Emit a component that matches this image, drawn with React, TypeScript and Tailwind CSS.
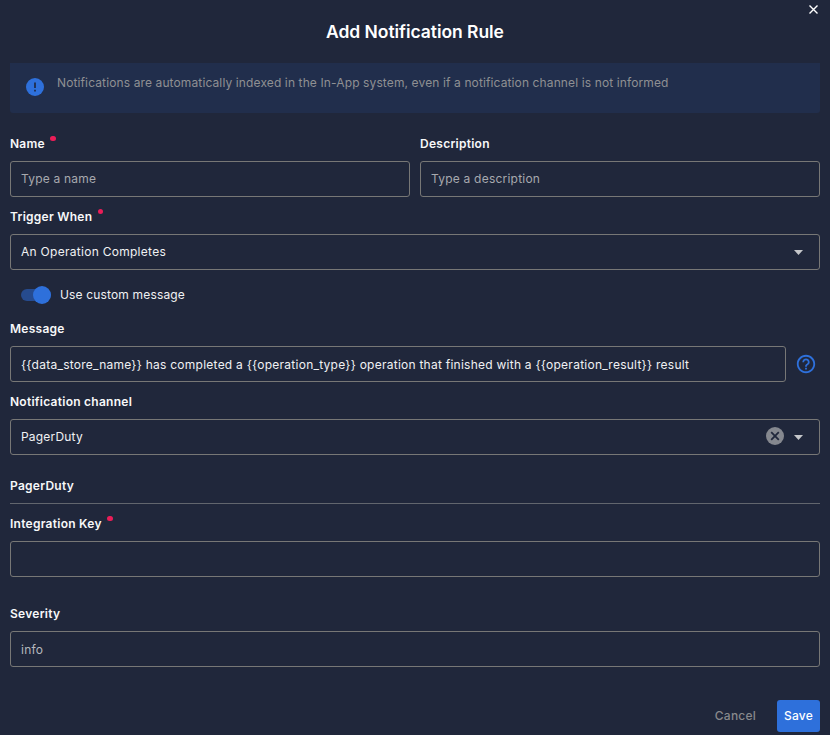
import type { ReactNode } from "react";

const Label = ({ children, required, className = "" }: { children: ReactNode; required?: boolean; className?: string }) => (
  <div className={`flex h-[18px] items-center text-[12px] leading-[18px] font-semibold tracking-[0.26px] text-[#f7f8f9] ${className}`}>
    <span>{children}</span>
    {required && <span className="mb-[12px] ml-[5.500px] h-[5px] w-[5.500px] rounded-full bg-[#ea1d58]" />}
  </div>
);

const box = "flex h-9 items-center rounded-[3px] border border-[#777776] px-[10px] text-[12px]";

const Caret = () => (
  <svg width="9" height="5" viewBox="0 0 10 5" preserveAspectRatio="none" fill="#c5c7ca"><path d="M0 0h10L5 5z" /></svg>
);

export default function App() {
  return (
    <div className="h-[735px] w-[830px] overflow-hidden bg-[#20273b] px-[10px] font-['Inter','Liberation_Sans',sans-serif] text-[12px] text-[#f0f1f3]">
      <div className="-mr-[10px] flex h-[18px] justify-end pt-[5px] pr-[12px]">
        <svg width="9" height="9" viewBox="0 0 9 9" stroke="#fff" strokeWidth="1.4"><path d="M.5.5l8 8M8.500.5l-8 8" /></svg>
      </div>
      <h1 className="h-[45px] text-center text-[17.500px] leading-[27px] font-semibold tracking-[-0.050px] text-white">Add Notification Rule</h1>
      <div className="flex h-[50px] rounded-b-[3px] bg-[#212e4c] pl-[16px]">
        <svg className="mt-[15px]" width="18" height="18" viewBox="0 0 18 18"><circle cx="9" cy="9" r="9" fill="#2e70db" /><path d="M8.100 4.500h1.800v5.500H8.100zM8.100 11.800h1.800v1.700H8.100z" fill="#212e4c" /></svg>
        <p className="mt-[10px] ml-[13px] leading-[20px] tracking-[0.12px] text-[#8f9093]">Notifications are automatically indexed in the In-App system, even if a notification channel is not informed</p>
      </div>
      <div className="mt-[22px] grid grid-cols-2 gap-[10px]">
        <div><Label required>Name</Label><div className={`mt-2 tracking-[0.2px] text-[#a7a9ae] ${box}`}>Type a name</div></div>
        <div><Label>Description</Label><div className={`mt-2 tracking-[0.22px] text-[#a7a9ae] ${box}`}>Type a description</div></div>
      </div>
      <Label required className="mt-[11px]">Trigger When</Label>
      <div className={`mt-2 justify-between pr-4 tracking-[0.28px] ${box}`}>An Operation Completes<Caret /></div>
      <div className="mt-4 ml-[11px] flex h-[18px] items-center">
        <div className="flex h-3 w-[30px] items-center justify-end rounded-full bg-[#264b8e]"><span className="size-[18px] shrink-0 rounded-full bg-[#2e70db]" /></div>
        <span className="ml-[9px] tracking-[0.16px]">Use custom message</span>
      </div>
      <Label className="mt-4">Message</Label>
      <div className="mt-2 flex items-center">
        <div className={`w-[776px] pt-[2px] tracking-[0.25px] ${box}`}>{"{{data_store_name}} has completed a {{operation_type}} operation that finished with a {{operation_result}} result"}</div>
        <svg className="ml-[9px]" width="22" height="22" viewBox="0 0 24 24" fill="#2e70db"><path d="M11 18h2v-2h-2zm1-16C6.480 2 2 6.480 2 12s4.480 10 10 10 10-4.480 10-10S17.520 2 12 2m0 18c-4.410 0-8-3.590-8-8s3.590-8 8-8 8 3.590 8 8-3.590 8-8 8m0-14c-2.210 0-4 1.790-4 4h2c0-1.100.9-2 2-2s2 .9 2 2c0 2-3 1.750-3 5h2c0-2.250 3-2.500 3-5 0-2.210-1.790-4-4-4" /></svg>
      </div>
      <Label className="mt-[11px]">Notification channel</Label>
      <div className={`mt-2 pr-4 tracking-[0.2px] ${box}`}>
        <span className="flex-1">PagerDuty</span>
        <svg className="mr-[10px] mb-[2px]" width="18" height="18" viewBox="0 0 18 18"><circle cx="9" cy="9" r="9" fill="#85888f" /><path d="M5.200 5.200l7.600 7.600m0-7.600l-7.600 7.600" stroke="#20273b" strokeWidth="1.800" /></svg>
        <Caret />
      </div>
      <Label className="mt-[22px]">PagerDuty</Label>
      <hr className="mt-[8px] border-[#62666e]" />
      <Label required className="mt-[11px]">Integration Key</Label>
      <div className={`mt-2 ${box}`} />
      <Label className="mt-[28px]">Severity</Label>
      <div className={`mt-2 pt-[2px] tracking-[0.22px] text-[#b5b8bd] ${box}`}>info</div>
      <div className="mt-[33px] flex items-center justify-end gap-[21px] font-medium tracking-[0.22px]">
        <span className="text-[#88898c]">Cancel</span>
        <span className="flex h-8 w-[43px] items-center justify-center rounded-[3px] bg-[#2e70db] text-white">Save</span>
      </div>
    </div>
  );
}
